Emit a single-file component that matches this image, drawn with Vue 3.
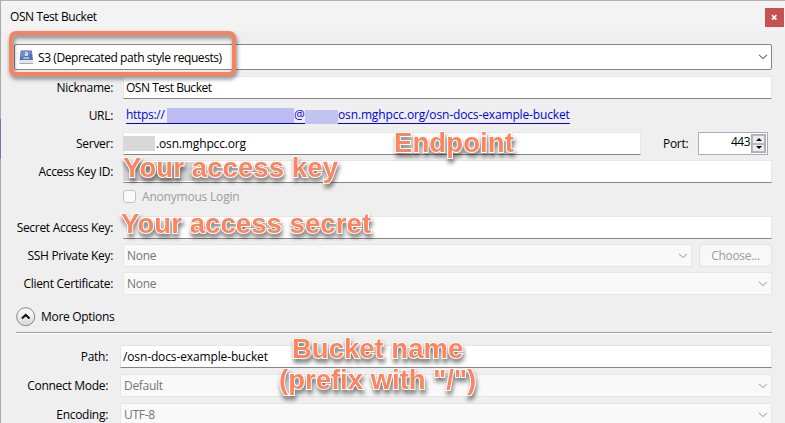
<script setup>
const notes = [
  { id: 'endpoint', lines: ['Endpoint'] },
  { id: 'key', lines: ['Your access key'] },
  { id: 'secret', lines: ['Your access secret'] },
  { id: 'bucket', lines: ['Bucket name', '(prefix with "/")'] },
]
</script>

<template>
  <div class="window">
    <header class="titlebar">
      <span class="title">OSN Test Bucket</span>
      <button class="close" aria-label="Close">
        <svg width="7" height="7" viewBox="0 0 7 7"><path d="M1 1.2 5.4 5.6M5.4 1.2 1 5.6" stroke="#fff" stroke-width="1.7" /></svg>
      </button>
    </header>

    <main class="content">
      <div class="protocol">
        <svg class="disk" width="15" height="15" viewBox="0 0 15 15">
          <path d="M1.7 0.5h11.2l1.1 10H0.6z" fill="#5470b7" />
          <path d="M2 .8h10.5l.3 3-11.4 4z" fill="#6f8bcb" />
          <rect x="0.3" y="10" width="14" height="3.5" rx=".6" fill="#e4e5e5" />
          <path d="M.5 13.5h13.7" stroke="#a7abb0" />
          <path d="M6 2.6q2.6-.7 2.4.8v2.3M8.2 4.1q-2.5-.1-2.3.8.4 1 2.3 0M4.3 8h6" stroke="#fff" fill="none" stroke-width="1" />
        </svg>
        <span class="protocol-name">S3 (Deprecated path style requests)</span>
        <svg class="chev" width="10" height="6" viewBox="0 0 10 6"><path d="M1 .8 5 4.6 9 .8" /></svg>
      </div>

      <section class="form">
        <label class="label">Nickname:</label>
        <div class="input"><span class="nick">OSN Test Bucket</span></div>

        <label class="label">URL:</label>
        <div class="url">
          <a class="link"><span class="scheme">https://</span><i class="mask user"></i><span class="at">@</span><i class="mask host"></i><span class="address">osn.mghpcc.org/osn-docs-example-bucket</span></a>
        </div>

        <label class="label">Server:</label>
        <div class="line">
          <div class="input server"><i class="blur"></i><span class="server-name">.osn.mghpcc.org</span></div>
          <label class="port">Port:</label>
          <div class="spinner">
            <span class="number">443</span>
            <div class="steps">
              <b><svg width="6" height="3" viewBox="0 0 6 3"><path d="M0 3 3 0l3 3z" /></svg></b>
              <b><svg width="6" height="3" viewBox="0 0 6 3"><path d="M0 0h6L3 3z" /></svg></b>
            </div>
          </div>
        </div>

        <label class="label">Access Key ID:</label>
        <div class="input access"><i class="blur wide"></i></div>

        <span></span>
        <label class="check"><i class="box"></i><span>Anonymous Login</span></label>

        <label class="label">Secret Access Key:</label>
        <div class="input"></div>

        <label class="label">SSH Private Key:</label>
        <div class="line">
          <div class="select ssh"><span>None</span><svg class="chev" width="10" height="6" viewBox="0 0 10 6"><path d="M1 .8 5 4.6 9 .8" /></svg></div>
          <button class="choose">Choose...</button>
        </div>

        <label class="label">Client Certificate:</label>
        <div class="select"><span>None</span><svg class="chev" width="10" height="6" viewBox="0 0 10 6"><path d="M1 .8 5 4.6 9 .8" /></svg></div>
      </section>

      <div class="more">
        <svg width="20" height="20" viewBox="0 0 20 20">
          <defs><linearGradient id="knob" x2="0" y2="1"><stop stop-color="#fff" /><stop offset="1" stop-color="#d8d8d8" /></linearGradient></defs>
          <circle cx="9.7" cy="9.7" r="9" fill="url(#knob)" stroke="#858585" />
          <path d="M5.9 11.5 9.7 7.9l3.8 3.6" fill="none" stroke="#111" stroke-width="2" />
        </svg>
        <span>More Options</span>
      </div>

      <section class="form options">
        <label class="label">Path:</label>
        <div class="input"><span class="path">/osn-docs-example-bucket</span></div>
        <label class="label">Connect Mode:</label>
        <div class="select"><span>Default</span><svg class="chev" width="10" height="6" viewBox="0 0 10 6"><path d="M1 .8 5 4.6 9 .8" /></svg></div>
        <label class="label">Encoding:</label>
        <div class="select"><span>UTF-8</span><svg class="chev" width="10" height="6" viewBox="0 0 10 6"><path d="M1 .8 5 4.6 9 .8" /></svg></div>
      </section>
    </main>

    <div class="highlight"></div>
    <div v-for="n in notes" :key="n.id" class="note" :class="n.id">
      <div v-for="l in n.lines" :key="l">{{ l }}</div>
    </div>
  </div>
</template>

<style>
body { margin: 0; overflow: hidden; }
</style>

<style scoped>
* { box-sizing: border-box; }
.window {
  position: relative;
  width: 785px;
  height: 423px;
  overflow: hidden;
  padding-left: 1px;
  background: linear-gradient(#a9a9a9 118px, #6b7bad 118px 158px, #a9a9a9 158px) 0 0 / 1px 100% no-repeat #efefef;
  border-top: 1px solid #b0b0b0;
  font: 12px/16px "Open Sans", "Noto Sans", sans-serif;
  letter-spacing: -0.3px;
  color: #000;
  white-space: nowrap;
}
.titlebar {
  height: 30px;
  display: flex;
  align-items: center;
  justify-content: space-between;
  background: #f3f3f3;
  padding: 0 1px 0 9px;
}
.title { letter-spacing: -0.4px; margin-top: 1px; }
.close {
  width: 19px;
  height: 19px;
  margin-top: 3px;
  border: 0;
  padding: 0;
  background: #c75050;
  display: grid;
  place-items: center;
}
.content { padding: 13px 13px 0; }
.protocol {
  height: 26px;
  border: 1px solid #858585;
  border-radius: 2px;
  background: #fff;
  display: flex;
  align-items: center;
  padding: 0 3px 0 4px;
}
.protocol-name { margin: 2px auto 0 4px; letter-spacing: -0.42px; }
.chev { flex: none; fill: none; stroke: #666; stroke-width: 1.1; }
.form {
  display: grid;
  grid-template-columns: 99px 649px;
  grid-auto-rows: 23px;
  row-gap: 5px;
  column-gap: 10px;
  margin-top: 6px;
  align-items: center;
}
.label { text-align: right; }
.input {
  height: 23px;
  background: #fff;
  border: 1px solid #e6e6e6;
  border-bottom-color: #858585;
  display: flex;
  align-items: center;
  padding: 0 2px;
}
.nick { letter-spacing: -0.48px; }
.url { padding-left: 3px; }
.link {
  display: flex;
  align-items: flex-end;
  height: 15px;
  width: 444px;
  margin-top: 1px;
  border-bottom: 1px solid #0000f0;
  color: #0000f0;
  line-height: 16px;
}
.scheme { width: 41px; }
.at { width: 11px; }
.mask { height: 14px; margin-bottom: -1px; }
.user { width: 127px; height: 15px; background: #bcbcf2; margin-bottom: 0; }
.host { width: 33px; background: #c3c3f1; }
.address { letter-spacing: -0.14px; }
.line { display: flex; align-items: center; }
.server { width: 518px; padding: 0; }
.server-name { letter-spacing: -0.15px; margin-left: 1px; }
.path { letter-spacing: -0.13px; }
.blur { width: 32px; height: 15px; background: #d9d8d9; margin-left: -1px; }
.wide { width: 72px; height: 19px; background: #d5d5d5; }
.access { padding: 0; }
.port { margin-left: 22px; width: 35px; }
.spinner {
  width: 70px;
  height: 23px;
  border: 1px solid #abadb3;
  background: #fff;
  display: flex;
  justify-content: flex-end;
  padding: 1px;
}
.number { margin-right: 1px; line-height: 16px; letter-spacing: -0.5px; }
.steps { width: 15px; display: grid; grid-template-rows: 1fr 1fr; border: 1px solid #abadb3; }
.steps b { display: grid; place-items: center; background: #ededed; border: 1px solid #b8b8b8; }
.check { display: flex; align-items: center; gap: 6px; height: 17px; align-self: start; color: #9d9d9d; letter-spacing: -0.2px; }
.box { width: 13px; height: 13px; border: 1px solid #c2c2c2; border-radius: 3px; background: #f9f9f9; }
.select {
  height: 23px;
  background: #f9f9f9;
  border: 1px solid #e6e6e6;
  border-radius: 1px;
  display: flex;
  align-items: center;
  justify-content: space-between;
  padding: 0 3px;
  color: #767676;
}
.select .chev { stroke: #b0b0b0; }
.ssh { width: 569px; }
.choose {
  width: 73px;
  height: 23px;
  margin-left: 7px;
  padding: 0;
  border: 1px solid #e2e2e2;
  border-radius: 4px;
  background: #f8f8f8;
  color: #9d9d9d;
  font: inherit;
  letter-spacing: inherit;
}
.more {
  display: flex;
  align-items: center;
  gap: 5px;
  height: 26px;
  margin: 12px 0 0 2px;
  border-bottom: 1px solid #a0a0a0;
  box-shadow: 0 1px #fff;
  padding-bottom: 5px;
}
.options {
  grid-template-columns: 94px 652px;
  column-gap: 12px;
  row-gap: 6px;
  margin-top: 12px;
}
.highlight {
  position: absolute;
  left: 9px;
  top: 30px;
  width: 227px;
  height: 45px;
  border: 4px solid #f4845f;
  border-radius: 7px;
  filter: drop-shadow(1px 3px 2px rgba(0, 0, 0, .5));
}
.note {
  position: absolute;
  font: bold 27.5px/31px "Liberation Sans", Arial, sans-serif;
  letter-spacing: 0;
  color: #f98660;
  -webkit-text-stroke: 2px #fff;
  paint-order: stroke fill;
  filter: drop-shadow(1px 4px 2px rgba(0, 0, 0, .5));
}
.endpoint { left: 394px; top: 126px; letter-spacing: 0.1px; }
.key { left: 123px; top: 151px; letter-spacing: 0.1px; }
.secret { left: 121px; top: 207px; letter-spacing: 0.08px; }
.bucket { left: 279px; top: 332px; text-align: center; }
</style>
